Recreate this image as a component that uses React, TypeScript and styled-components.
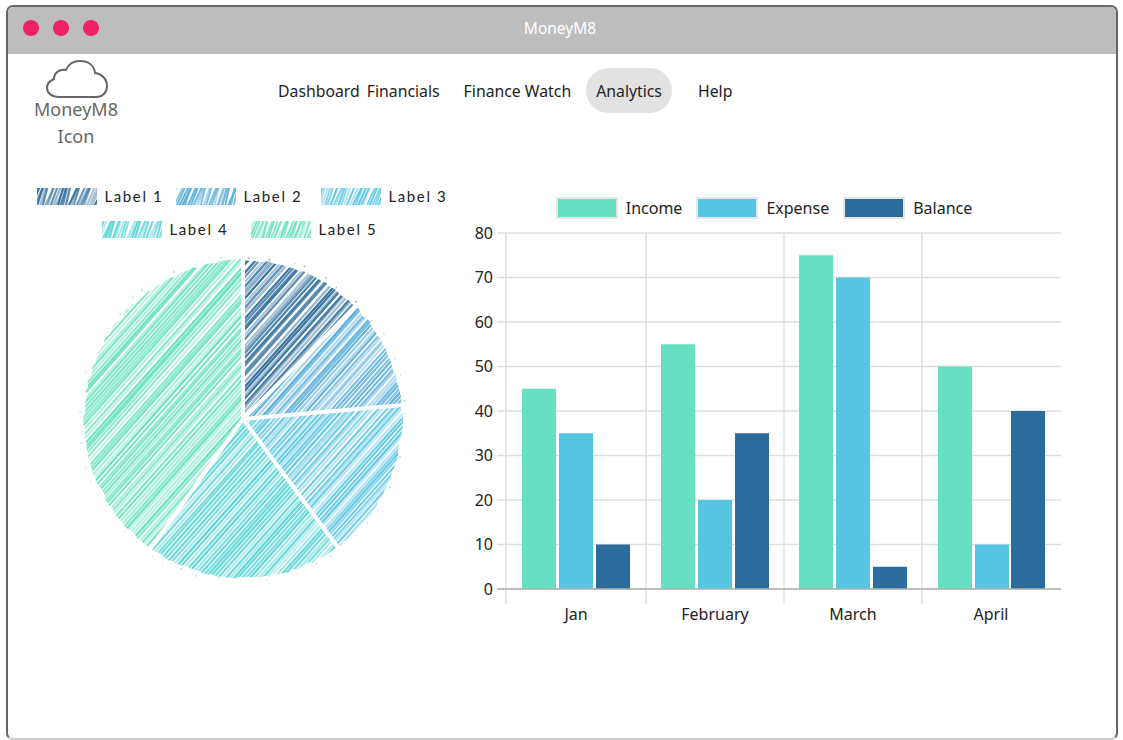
import React from 'react';
import styled, {createGlobalStyle} from 'styled-components';

const GlobalStyle = createGlobalStyle`
  html, body {
    margin: 0;
    padding: 0;
    background: #fff;
    overflow: hidden;
  }
  body {
    font-family: 'Noto Sans', 'Open Sans', sans-serif;
  }
`;

const INCOME = '#66e0c0';
const EXPENSE = '#55c5e2';
const BALANCE = '#2c6c9c';

const pieSlices = [
  {label: 'Label 1', from: 0, to: 45, color: '#2c6c9c', labelWidth: 56},
  {label: 'Label 2', from: 45, to: 85, color: '#55acd9', labelWidth: 62},
  {label: 'Label 3', from: 85, to: 143.5, color: '#62c8e4', labelWidth: 61},
  {label: 'Label 4', from: 143.5, to: 215.5, color: '#5ad4d6', labelWidth: 66},
  {label: 'Label 5', from: 215.5, to: 360, color: '#6ce2c0', labelWidth: 66},
];

const barData = [
  {month: 'Jan', income: 45, expense: 35, balance: 10, x: [522, 559, 596], cx: 576},
  {month: 'February', income: 55, expense: 20, balance: 35, x: [661, 698, 735], cx: 715},
  {month: 'March', income: 75, expense: 70, balance: 5, x: [799, 836, 873], cx: 853},
  {month: 'April', income: 50, expense: 10, balance: 40, x: [938, 975, 1011], cx: 991},
];

// small seeded random so the hatching is the same on every load
const makeRandom = (seed: number) => () => {
  seed = (seed + 0x6d2b79f5) | 0;
  let t = Math.imul(seed ^ (seed >>> 15), 1 | seed);
  t = (t + Math.imul(t ^ (t >>> 7), 61 | t)) ^ t;
  return ((t ^ (t >>> 14)) >>> 0) / 4294967296;
};

type HatchProps = {
  width: number;
  height: number;
  color: string;
  seed: number;
  gap: number;
  tilt?: number;
  wobble?: number;
  weight?: number;
};

// diagonal scribble strokes covering a width x height box
const Hatch: React.FC<HatchProps> = ({width, height, color, seed, gap, tilt = 0.9, wobble = 1.5, weight = 2}) => {
  const rand = makeRandom(seed);
  const lines = [];
  const rise = height * tilt;
  for (let x = -rise; x < width + 4; x += gap * (0.85 + rand() * 0.3)) {
    const drift = (rand() * 2 - 1) * wobble;
    const dark = rand() > 0.35;
    lines.push(
      <line
        key={x}
        x1={x}
        y1={height + 2}
        x2={x + rise + drift}
        y2={-2}
        stroke={color}
        strokeWidth={weight + rand() * 0.5}
        strokeOpacity={dark ? 0.72 + rand() * 0.25 : 0.38 + rand() * 0.2}
      />,
    );
  }
  return <g>{lines}</g>;
};

const PIE_R = 160;
const PIE_C = 164;

const polar = (deg: number, r: number) => {
  const a = ((deg - 90) * Math.PI) / 180;
  return [PIE_C + r * Math.cos(a), PIE_C + r * Math.sin(a)];
};

const slicePath = (from: number, to: number, seed: number) => {
  const rand = makeRandom(seed);
  const points = [`${PIE_C},${PIE_C}`];
  for (let d = from; d <= to; d += 1.5) {
    const [x, y] = polar(d, PIE_R - rand() * 2.5);
    points.push(`${x.toFixed(1)},${y.toFixed(1)}`);
  }
  const [ex, ey] = polar(to, PIE_R);
  points.push(`${ex.toFixed(1)},${ey.toFixed(1)}`);
  return points.join(' ');
};

const SketchPie: React.FC = () => {
  const rand = makeRandom(77);
  const specks = pieSlices.flatMap((slice, i) => {
    const out = [];
    for (let d = slice.from; d < slice.to; d += 7) {
      const [x, y] = polar(d + rand() * 5, PIE_R + 1 + rand() * 4);
      out.push(
        <circle key={`${i}-${d}`} cx={x} cy={y} r={0.5 + rand() * 0.6} fill={slice.color} fillOpacity={0.55} />,
      );
    }
    return out;
  });

  return (
    <PieSvg width={328} height={328} viewBox="0 0 328 328">
      <defs>
        {pieSlices.map((slice, i) => (
          <clipPath id={`slice-${i}`} key={slice.label}>
            <polygon points={slicePath(slice.from, slice.to, 11 + i)} />
          </clipPath>
        ))}
      </defs>
      {pieSlices.map((slice, i) => (
        <g clipPath={`url(#slice-${i})`} key={slice.label}>
          <Hatch width={328} height={328} color={slice.color} seed={31 + i} gap={4.1} />
        </g>
      ))}
      {specks}
      {pieSlices.map(slice => {
        const [x, y] = polar(slice.from, PIE_R + 4);
        return (
          <line key={slice.label} x1={PIE_C} y1={PIE_C} x2={x} y2={y} stroke="#fff" strokeWidth={4} strokeLinecap="round" />
        );
      })}
    </PieSvg>
  );
};

const Swatch: React.FC<{color: string; seed: number}> = ({color, seed}) => (
  <SwatchSvg width={60} height={17} viewBox="0 0 60 17">
    <Hatch width={60} height={17} color={color} seed={seed} gap={2.7} tilt={0.45} wobble={3} weight={1.8} />
  </SwatchSvg>
);

const LEFT = 468;
const TOP = 220;

const BarChart: React.FC = () => {
  const zero = 589 - TOP;
  const unit = 4.45;
  const ticks = [0, 10, 20, 30, 40, 50, 60, 70, 80];
  return (
    <ChartSvg width={600} height={410} viewBox={`${LEFT} 0 600 410`}>
      {ticks.map(t => (
        <GridLine key={t} x1={497} x2={1061} y1={zero - t * unit} y2={zero - t * unit} />
      ))}
      {[506, 646, 784, 922].map(x => (
        <GridLine key={x} x1={x} x2={x} y1={zero - 80 * unit} y2={zero + 15} />
      ))}
      {barData.map(group => (
        <g key={group.month}>
          <rect x={group.x[0]} width={34} y={zero - group.income * unit} height={group.income * unit} fill={INCOME} />
          <rect x={group.x[1]} width={34} y={zero - group.expense * unit} height={group.expense * unit} fill={EXPENSE} />
          <rect x={group.x[2]} width={34} y={zero - group.balance * unit} height={group.balance * unit} fill={BALANCE} />
          <AxisLabel x={group.cx} y={zero + 31} textAnchor="middle">
            {group.month}
          </AxisLabel>
        </g>
      ))}
      <line x1={497} x2={1061} y1={zero} y2={zero} stroke="#b0b0b0" strokeWidth={1.5} />
      {ticks.map(t => (
        <AxisLabel key={t} x={493} y={zero - t * unit + 5.5} textAnchor="end">
          {t}
        </AxisLabel>
      ))}
    </ChartSvg>
  );
};

const App: React.FC = () => (
  <Window>
    <GlobalStyle />
    <TitleBar>
      <Dots>
        <Dot />
        <Dot />
        <Dot />
      </Dots>
      <Title>MoneyM8</Title>
    </TitleBar>
    <Header>
      <Logo>
        <svg width={64} height={42} viewBox="0 0 64 42" fill="none" stroke="#666" strokeWidth={2}>
          <path d="M12 38 H50 C57 38 61 33 61 27 C61 20 56 15 49 14 C48 6 42 2 34 2 C27 2 22 6 20 11 C13 10 8 14 8 20 C3 22 1 26 1 29 C1 34 6 38 12 38 Z" />
        </svg>
        <LogoText>
          MoneyM8
          <br />
          Icon
        </LogoText>
      </Logo>
      <Nav>
        <NavLink>Dashboard</NavLink>
        <NavLink $gap={7}>Financials</NavLink>
        <NavLink $gap={24}>Finance Watch</NavLink>
        <NavLink $gap={15} $active>
          Analytics
        </NavLink>
        <NavLink $gap={26}>Help</NavLink>
      </Nav>
    </Header>
    <Charts>
      <PiePanel>
        <SketchLegend>
          {pieSlices.map((slice, i) => (
            <SketchLegendItem key={slice.label}>
              <Swatch color={slice.color} seed={5 + i} />
              <SketchLabel $width={slice.labelWidth}>{slice.label}</SketchLabel>
            </SketchLegendItem>
          ))}
        </SketchLegend>
        <SketchPie />
      </PiePanel>
      <BarPanel>
        <BarLegend>
          <BarLegendItem>
            <BarKey $color={INCOME} />
            Income
          </BarLegendItem>
          <BarLegendItem>
            <BarKey $color={EXPENSE} />
            Expense
          </BarLegendItem>
          <BarLegendItem>
            <BarKey $color={BALANCE} />
            Balance
          </BarLegendItem>
        </BarLegend>
        <BarChart />
      </BarPanel>
    </Charts>
  </Window>
);

const Window = styled.div`
  box-sizing: border-box;
  width: 1112px;
  height: 735px;
  margin: 5px 0 0 6px;
  border: 2px solid #666;
  border-bottom-color: #ccc;
  border-radius: 7px;
  overflow: hidden;
  background: #fff;
`;

const TitleBar = styled.div`
  height: 47px;
  background: #bdbdbd;
  display: flex;
  align-items: center;
  position: relative;
`;

const Dots = styled.div`
  display: flex;
  gap: 14px;
  padding-left: 15px;
  margin-top: -5px;
`;

const Dot = styled.span`
  width: 16px;
  height: 16px;
  border-radius: 50%;
  background: #ee2066;
`;

const Title = styled.div`
  position: absolute;
  left: 0;
  right: 4px;
  top: 10px;
  text-align: center;
  color: #fff;
  font-size: 15.5px;
`;

const Header = styled.div`
  display: flex;
  align-items: flex-start;
`;

const Logo = styled.div`
  width: 94px;
  margin-left: 21px;
  padding-top: 5px;
  display: flex;
  flex-direction: column;
  align-items: center;
  svg {
    display: block;
    margin-left: 4px;
  }
`;

const LogoText = styled.div`
  color: #666;
  font-size: 18px;
  line-height: 27px;
  text-align: center;
  margin-top: -5px;
`;

const Nav = styled.nav`
  display: flex;
  align-items: center;
  margin-left: 155px;
  margin-top: 14px;
  height: 45px;
`;

const NavLink = styled.a<{$gap?: number; $active?: boolean}>`
  margin-left: ${p => p.$gap || 0}px;
  padding: 0 ${p => (p.$active ? '10px' : '0')};
  height: 45px;
  line-height: 46px;
  border-radius: 23px;
  color: #222;
  font-size: 15.8px;
  white-space: nowrap;
  background: ${p => (p.$active ? '#e2e2e2' : 'transparent')};
`;

const Charts = styled.div`
  display: flex;
  align-items: flex-start;
  margin-top: 36px;
`;

const PiePanel = styled.div`
  width: 430px;
  margin-left: 20px;
  display: flex;
  flex-direction: column;
  align-items: center;
`;

const SketchLegend = styled.div`
  display: flex;
  flex-wrap: wrap;
  justify-content: center;
  column-gap: 15px;
  row-gap: 13px;
  height: 68px;
  align-content: flex-start;
`;

const SketchLegendItem = styled.div`
  display: flex;
  align-items: center;
  gap: 8px;
  height: 20px;
`;

const SwatchSvg = styled.svg`
  display: block;
`;

const SketchLabel = styled.span<{$width: number}>`
  width: ${p => p.$width}px;
  font-family: 'Lato', sans-serif;
  font-weight: 400;
  font-size: 15px;
  letter-spacing: 1.6px;
  white-space: nowrap;
  color: #222;
`;

const PieSvg = styled.svg`
  display: block;
  margin-top: 1px;
`;

const BarPanel = styled.div`
  width: 600px;
  margin-left: 10px;
  padding-top: 10px;
`;

const BarLegend = styled.div`
  display: flex;
  justify-content: center;
  gap: 14px;
  height: 24px;
  margin-left: -8px;
`;

const BarLegendItem = styled.div`
  display: flex;
  align-items: center;
  gap: 8px;
  font-size: 16px;
  color: #222;
`;

const BarKey = styled.span<{$color: string}>`
  box-sizing: border-box;
  width: 62px;
  height: 22px;
  background: ${p => p.$color};
  border: 2px solid #e6e6e6;
`;

const ChartSvg = styled.svg`
  display: block;
`;

const GridLine = styled.line`
  stroke: #dedede;
  stroke-width: 1.3;
`;

const AxisLabel = styled.text`
  font-family: 'Noto Sans', 'Open Sans', sans-serif;
  font-size: 16px;
  fill: #222;
`;

export default App;
